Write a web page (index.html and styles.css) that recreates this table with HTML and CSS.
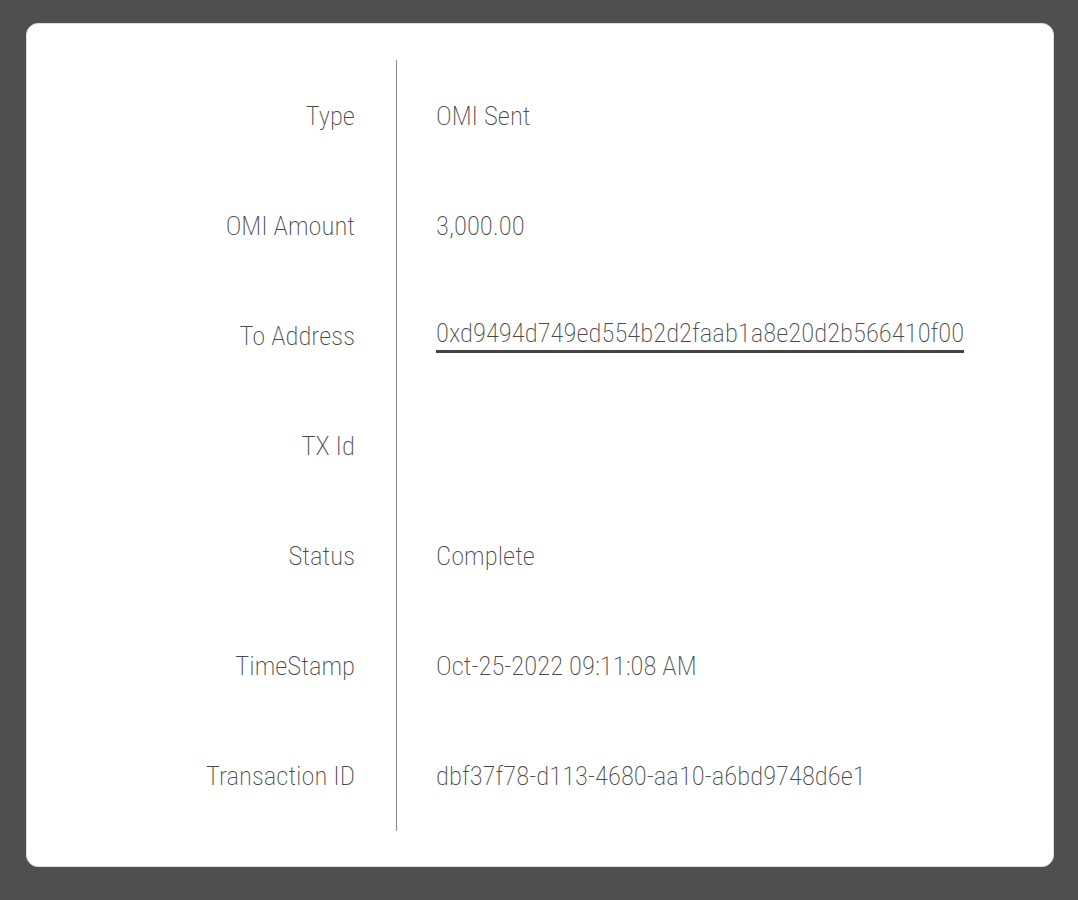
FILE: index.html
```html
<!DOCTYPE html>
<html>
<head>
<meta charset="utf-8">
<link rel="stylesheet" href="styles.css">
</head>
<body>
<div class="card">
  <div class="details">
    <div class="labels">
      <div class="cell">Type</div>
      <div class="cell">OMI Amount</div>
      <div class="cell">To Address</div>
      <div class="cell">TX Id</div>
      <div class="cell">Status</div>
      <div class="cell">TimeStamp</div>
      <div class="cell">Transaction ID</div>
    </div>
    <div class="values">
      <div class="cell">OMI Sent</div>
      <div class="cell">3,000.00</div>
      <div class="cell"><span class="link">0xd9494d749ed554b2d2faab1a8e20d2b566410f00</span></div>
      <div class="cell"></div>
      <div class="cell">Complete</div>
      <div class="cell">Oct-25-2022 09:11:08 AM</div>
      <div class="cell">dbf37f78-d113-4680-aa10-a6bd9748d6e1</div>
    </div>
  </div>
</div>
</body>
</html>
```
FILE: styles.css
```css
html, body {
  margin: 0;
  padding: 0;
  background: #4f4f4f;
}
body {
  padding: 23px 24px 33px 26px;
  font-family: "Roboto Condensed", Roboto, sans-serif;
  font-stretch: condensed;
  font-weight: 200;
  color: #4a4a4a;
}
.card {
  background: #fff;
  border-radius: 12px;
  border: 1px solid #ddd;
  height: 844px;
  box-sizing: border-box;
  padding: 36px 0 35px 0;
}
.details {
  display: flex;
  height: 100%;
}
.labels {
  width: 369px;
  border-right: 1px solid #888;
  display: flex;
  flex-direction: column;
}
.values {
  flex: 1;
  display: flex;
  flex-direction: column;
}
.cell {
  height: 110px;
  flex: none;
  display: flex;
  align-items: center;
  font-size: 26.7px;
  line-height: 1;
  padding-top: 3px;
  box-sizing: border-box;
}
.labels .cell {
  justify-content: flex-end;
  padding-right: 41px;
}
.values .cell {
  padding-left: 39px;
}
.link {
  border-bottom: 3px solid #444;
  padding-bottom: 4px;
}
```
